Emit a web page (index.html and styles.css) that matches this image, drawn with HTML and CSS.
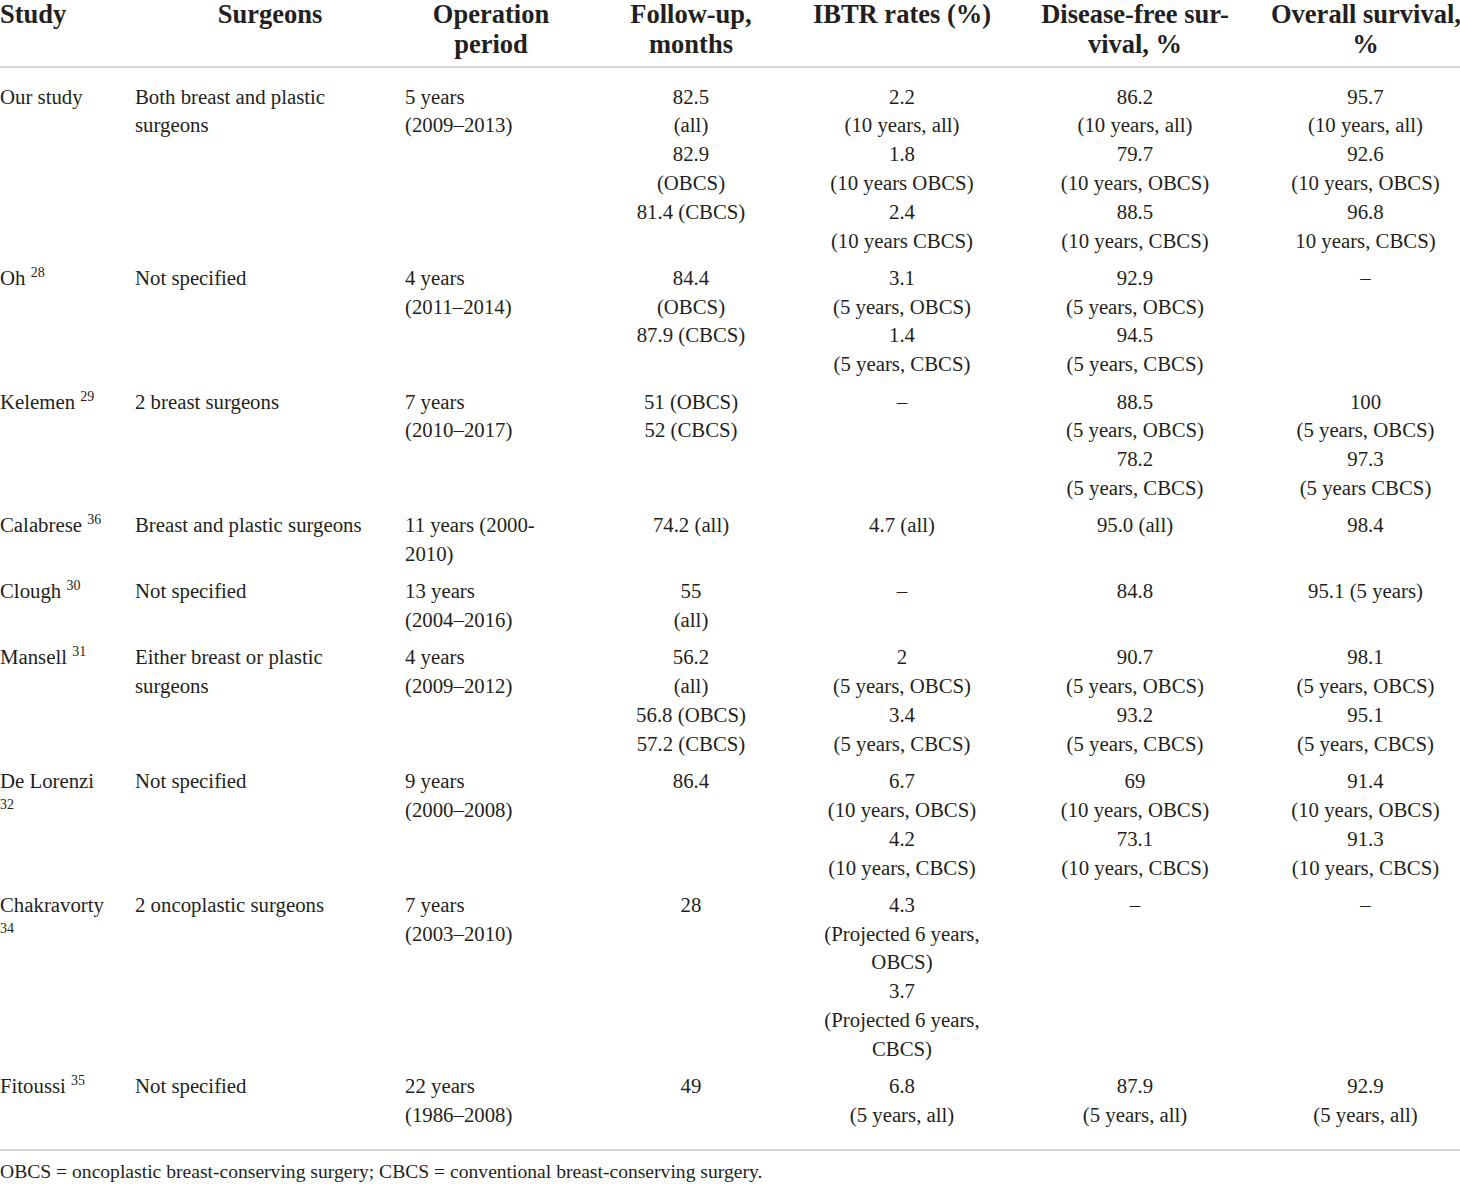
FILE: index.html
```html
<!DOCTYPE html>
<html lang="en">
<head>
    <meta charset="UTF-8">
    <meta name="viewport" content="width=device-width, initial-scale=1.0">
    <title>Oncoplastic vs conventional breast-conserving surgery</title>
    <link rel="stylesheet" href="styles.css">
</head>
<body>
    <table class="results">
        <colgroup>
            <col class="col-study">
            <col class="col-surgeons">
            <col class="col-period">
            <col class="col-follow">
            <col class="col-ibtr">
            <col class="col-dfs">
            <col class="col-os">
        </colgroup>
        <thead>
            <tr>
                <th class="left">Study</th>
                <th>Surgeons</th>
                <th>Operation<br>period</th>
                <th>Follow-up,<br>months</th>
                <th>IBTR rates (%)</th>
                <th>Disease-free sur-<br>vival, %</th>
                <th>Overall survival,<br>%</th>
            </tr>
        </thead>
        <tbody>
            <tr>
                <td>Our study</td>
                <td>Both breast and plastic<br>surgeons</td>
                <td>5 years<br>(2009–2013)</td>
                <td class="num">82.5<br>(all)<br>82.9<br>(OBCS)<br>81.4 (CBCS)</td>
                <td class="num">2.2<br>(10 years, all)<br>1.8<br>(10 years OBCS)<br>2.4<br>(10 years CBCS)</td>
                <td class="num">86.2<br>(10 years, all)<br>79.7<br>(10 years, OBCS)<br>88.5<br>(10 years, CBCS)</td>
                <td class="num">95.7<br>(10 years, all)<br>92.6<br>(10 years, OBCS)<br>96.8<br>10 years, CBCS)</td>
            </tr>
            <tr>
                <td>Oh <sup>28</sup></td>
                <td>Not specified</td>
                <td>4 years<br>(2011–2014)</td>
                <td class="num">84.4<br>(OBCS)<br>87.9 (CBCS)</td>
                <td class="num">3.1<br>(5 years, OBCS)<br>1.4<br>(5 years, CBCS)</td>
                <td class="num">92.9<br>(5 years, OBCS)<br>94.5<br>(5 years, CBCS)</td>
                <td class="num">–</td>
            </tr>
            <tr>
                <td>Kelemen <sup>29</sup></td>
                <td>2 breast surgeons</td>
                <td>7 years<br>(2010–2017)</td>
                <td class="num">51 (OBCS)<br>52 (CBCS)</td>
                <td class="num">–</td>
                <td class="num">88.5<br>(5 years, OBCS)<br>78.2<br>(5 years, CBCS)</td>
                <td class="num">100<br>(5 years, OBCS)<br>97.3<br>(5 years CBCS)</td>
            </tr>
            <tr>
                <td>Calabrese <sup>36</sup></td>
                <td>Breast and plastic surgeons</td>
                <td>11 years (2000-<br>2010)</td>
                <td class="num">74.2 (all)</td>
                <td class="num">4.7 (all)</td>
                <td class="num">95.0 (all)</td>
                <td class="num">98.4</td>
            </tr>
            <tr>
                <td>Clough <sup>30</sup></td>
                <td>Not specified</td>
                <td>13 years<br>(2004–2016)</td>
                <td class="num">55<br>(all)</td>
                <td class="num">–</td>
                <td class="num">84.8</td>
                <td class="num">95.1 (5 years)</td>
            </tr>
            <tr>
                <td>Mansell <sup>31</sup></td>
                <td>Either breast or plastic<br>surgeons</td>
                <td>4 years<br>(2009–2012)</td>
                <td class="num">56.2<br>(all)<br>56.8 (OBCS)<br>57.2 (CBCS)</td>
                <td class="num">2<br>(5 years, OBCS)<br>3.4<br>(5 years, CBCS)</td>
                <td class="num">90.7<br>(5 years, OBCS)<br>93.2<br>(5 years, CBCS)</td>
                <td class="num">98.1<br>(5 years, OBCS)<br>95.1<br>(5 years, CBCS)</td>
            </tr>
            <tr>
                <td>De Lorenzi<br><sup>32</sup></td>
                <td>Not specified</td>
                <td>9 years<br>(2000–2008)</td>
                <td class="num">86.4</td>
                <td class="num">6.7<br>(10 years, OBCS)<br>4.2<br>(10 years, CBCS)</td>
                <td class="num">69<br>(10 years, OBCS)<br>73.1<br>(10 years, CBCS)</td>
                <td class="num">91.4<br>(10 years, OBCS)<br>91.3<br>(10 years, CBCS)</td>
            </tr>
            <tr>
                <td>Chakravorty<br><sup>34</sup></td>
                <td>2 oncoplastic surgeons</td>
                <td>7 years<br>(2003–2010)</td>
                <td class="num">28</td>
                <td class="num">4.3<br>(Projected 6 years,<br>OBCS)<br>3.7<br>(Projected 6 years,<br>CBCS)</td>
                <td class="num">–</td>
                <td class="num">–</td>
            </tr>
            <tr class="last">
                <td>Fitoussi <sup>35</sup></td>
                <td>Not specified</td>
                <td>22 years<br>(1986–2008)</td>
                <td class="num">49</td>
                <td class="num">6.8<br>(5 years, all)</td>
                <td class="num">87.9<br>(5 years, all)</td>
                <td class="num">92.9<br>(5 years, all)</td>
            </tr>
        </tbody>
    </table>

    <p class="note">OBCS = oncoplastic breast-conserving surgery; CBCS = conventional breast-conserving surgery.</p>
</body>
</html>
```

FILE: styles.css
```css
body {
    margin: 0;
    background-color: #fff;
    color: #231f20;
    font-family: "Liberation Serif", "Times New Roman", serif;
}

.results {
    width: 1460px;
    border-collapse: collapse;
    table-layout: fixed;
}

.col-study { width: 135px; }
.col-surgeons { width: 270px; }
.col-period { width: 172px; }
.col-follow { width: 228px; }
.col-ibtr { width: 194px; }
.col-dfs { width: 272px; }
.col-os { width: 189px; }

th {
    padding: 0 0 7px 0;
    font-size: 26.5px;
    line-height: 29.5px;
    font-weight: bold;
    text-align: center;
    vertical-align: top;
    white-space: nowrap;
    border-bottom: 2px solid #d4d4d4;
}

th.left {
    text-align: left;
}

td {
    padding: 4px 0 4.5px 0;
    font-size: 20.8px;
    line-height: 28.8px;
    text-align: left;
    vertical-align: top;
}

td.num {
    text-align: center;
}

tbody tr:first-child td {
    padding-top: 14.6px;
}

tr.last td {
    padding-bottom: 19.6px;
    border-bottom: 2px solid #d4d4d4;
}

sup {
    font-size: 14px;
    line-height: 0;
    vertical-align: 8px;
}

.note {
    margin: 7px 0 0 0;
    font-size: 19.6px;
    line-height: 28px;
}
```
